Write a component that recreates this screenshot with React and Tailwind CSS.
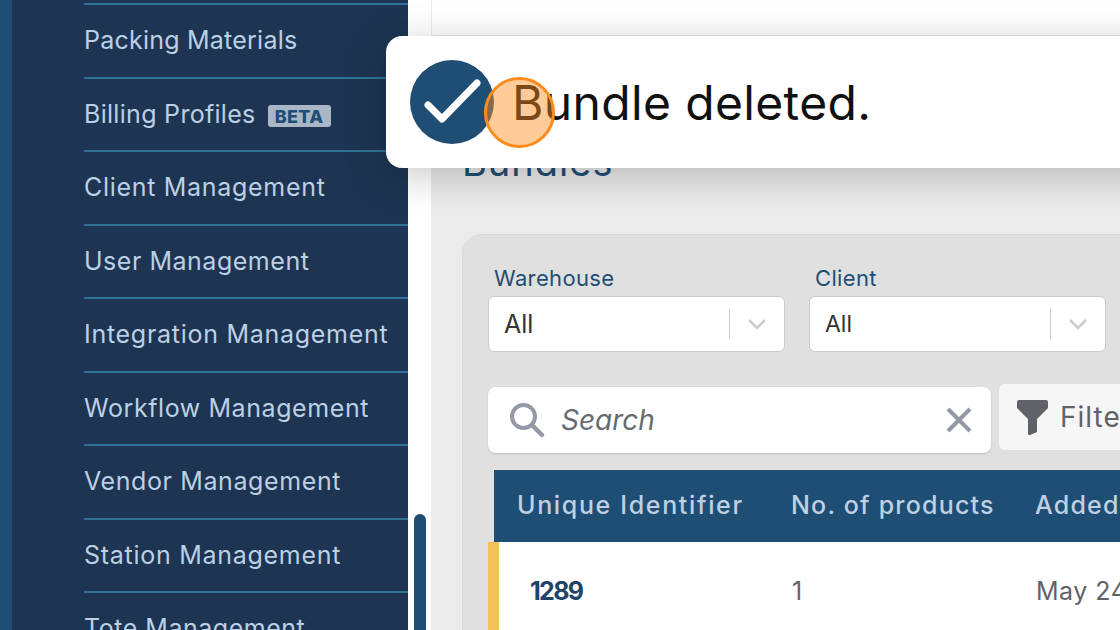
const navItems = [
  { label: "Packing Materials", track: "tracking-[0.23px]" },
  { label: "Billing Profiles", track: "tracking-[0.3px]" },
  { label: "Client Management", track: "tracking-[0.7px]" },
  { label: "User Management", track: "tracking-[0.52px]" },
  { label: "Integration Management", track: "tracking-[0.72px]" },
  { label: "Workflow Management", track: "tracking-[0.58px]" },
  { label: "Vendor Management", track: "tracking-[0.6px]" },
  { label: "Station Management", track: "tracking-[0.72px]" },
  { label: "Tote Management", track: "tracking-[0.52px]" },
];

function Chevron() {
  return (
    <svg width="20" height="12" viewBox="0 0 20 12" fill="none" className="shrink-0">
      <path d="M2 2l8 8 8-8" stroke="#cccccc" strokeWidth="2.6" />
    </svg>
  );
}

function SelectBox({ label, textClass, pad }) {
  return (
    <div className="flex w-[297px] flex-col">
      <span className="ml-[6px] h-[36px] pt-[4px] text-[22px] leading-[28px] tracking-[0.35px] text-[#1f4e75]">{label}</span>
      <div className="flex h-[56px] items-center rounded-[6px] border border-[#cbcbcb] bg-white">
        <span className={`mt-[1px] flex-1 text-[#333333] ${pad} ${textClass}`}>All</span>
        <span className="h-[30px] w-px bg-[#cccccc]" />
        <span className="flex w-[54px] justify-center pr-[1px]">
          <Chevron />
        </span>
      </div>
    </div>
  );
}

export default function App() {
  return (
    <div className="relative flex h-[630px] w-[1120px] overflow-hidden bg-white font-['Inter','Liberation_Sans',sans-serif]">
      <div className="w-[12px] shrink-0 bg-[#1f4e75]" />
      <nav className="w-[396px] shrink-0 bg-[#1d3552] pl-[72px] pt-[3px]">
        <ul className="border-t-2 border-[#2f7396]">
          {navItems.map((item) => (
            <li
              key={item.label}
              className={`flex h-[73.5px] items-center gap-[12px] border-b-2 border-[#2f7396] text-[25px] text-[#bcd0e5] ${item.track}`}
            >
              <span>{item.label}</span>
              {item.label === "Billing Profiles" && (
                <span className="mt-[4px] flex h-[22px] w-[63px] items-center justify-center rounded-[3px] bg-[#a9b6c6] text-[18px] font-extrabold tracking-[0.3px] text-[#1f4e75]">
                  BETA
                </span>
              )}
            </li>
          ))}
        </ul>
      </nav>
      <div className="flex w-[24px] shrink-0 flex-col justify-end border-r border-[#ececec] bg-white pl-[6px]">
        <div className="h-[116px] w-[12px] rounded-t-[6px] bg-[#1f4e75]" />
      </div>
      <main className="flex min-w-0 flex-1 flex-col">
        <header className="h-[36px] shrink-0 border-b border-[#e6e6e6] bg-white" />
        <div className="flex-1 bg-[#ebebeb] pl-[30px]">
          <h1 className="h-[134px] pt-[104px] text-[38px] leading-[44px] tracking-[1px] text-[#1f4e75]">Bundles</h1>
          <section className="mt-[64px] h-[500px] w-[800px] rounded-tl-[20px] border border-[#d9d9d9] bg-[#e0e0e0] pl-[25px] pt-[25px]">
            <div className="flex gap-[24px]">
              <SelectBox label="Warehouse" textClass="text-[25px]" pad="pl-[15px]" />
              <SelectBox label="Client" textClass="text-[23px]" pad="pl-[15px]" />
            </div>
            <div className="mt-[32px] flex items-start gap-[8px]">
              <div className="mt-[3px] flex h-[66px] w-[503px] items-center rounded-[8px] bg-white pl-[21px] pr-[18px] shadow-[0_1px_2px_rgba(0,0,0,0.15)]">
                <svg width="36" height="36" viewBox="0 0 36 36" fill="none" className="shrink-0">
                  <circle cx="14.5" cy="14.5" r="11.5" stroke="#939aa6" strokeWidth="4" />
                  <path d="M23 23l10 10" stroke="#939aa6" strokeWidth="4.5" strokeLinecap="round" />
                </svg>
                <span className="ml-[16px] flex-1 text-[28px] italic text-[#666b70]">Search</span>
                <svg width="28" height="28" viewBox="0 0 28 28" fill="none" className="shrink-0">
                  <path d="M3 3l22 22M25 3L3 25" stroke="#939aa6" strokeWidth="4" />
                </svg>
              </div>
              <div className="flex h-[66px] w-[200px] items-center gap-[12px] rounded-[6px] bg-[#f6f6f6] pl-[18px]">
                <svg width="31" height="35" viewBox="0 0 31 35" className="shrink-0">
                  <path d="M2 0h27a2 2 0 0 1 2 2v6L20 19v13l-7 3h-1a1 1 0 0 1-1-1V19L0 8V2a2 2 0 0 1 2-2z" fill="#5f6368" />
                </svg>
                <span className="text-[28px] tracking-[1px] text-[#5f6368]">Filters</span>
              </div>
            </div>
            <div className="ml-[6px] mt-[17px] flex h-[72px] items-center bg-[#1f4e75] text-[25px] font-medium text-[#bfd0e2]">
              <span className="ml-[23px] w-[274px] whitespace-nowrap tracking-[1.65px]">Unique Identifier</span>
              <span className="w-[244px] whitespace-nowrap tracking-[1.2px]">No. of products</span>
              <span className="whitespace-nowrap tracking-[1.2px]">Added on</span>
            </div>
            <div className="flex h-[120px] border-l-[11px] border-[#f5c15c] bg-white text-[25px] text-[#5f6368]">
              <span className="ml-[31px] mt-[31px] w-[262px] font-bold tracking-[-1.7px] text-[#1e4468]">1289</span>
              <span className="mt-[31px] w-[244px]">1</span>
              <span className="mt-[31px] whitespace-nowrap tracking-[0.5px]">May 24, 2023</span>
            </div>
          </section>
        </div>
      </main>

      <div className="absolute left-[386px] top-[36px] flex h-[132px] w-[800px] items-center rounded-[16px] bg-white pl-[24px] shadow-[0_8px_40px_rgba(0,0,0,0.22)]">
        <div className="flex h-[84px] w-[84px] shrink-0 items-center justify-center rounded-full bg-[#1f4e75]">
          <svg width="58" height="46" viewBox="0 0 58 46" fill="none">
            <path d="M5 26l14 14L54 4" stroke="#ffffff" strokeWidth="7" strokeLinecap="round" strokeLinejoin="round" />
          </svg>
        </div>
        <span className="ml-[18px] mt-[2px] whitespace-nowrap text-[48px] leading-none tracking-[0.36px] text-[#111111]">Bundle deleted.</span>
      </div>
      <div className="absolute left-[484px] top-[77px] h-[71px] w-[71px] rounded-full border-[3.5px] border-[#ff8c1a] bg-[#ff8c1a]/45" />
    </div>
  );
}
